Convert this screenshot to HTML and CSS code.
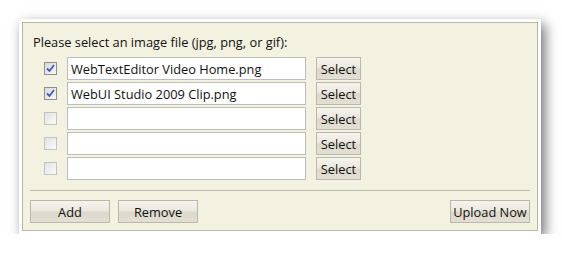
FILE: index.html
```html
<!DOCTYPE html>
<html lang="en">
<head>
    <meta charset="UTF-8">
    <title>Image Upload</title>
    <link rel="stylesheet" href="styles.css">
</head>
<body>
    <div class="frame">
        <div class="panel">
            <div class="prompt">Please select an image file (jpg, png, or gif):</div>

            <div class="rows">
                <div class="row">
                    <span class="check checked"><svg viewBox="0 0 9 9" width="9" height="9"><path d="M1 4.5 L3.5 7 L8 1" fill="none" stroke="#3b5cb4" stroke-width="1.8"/></svg></span>
                    <input class="field" type="text" value="WebTextEditor Video Home.png">
                    <button class="btn select-btn">Select</button>
                </div>
                <div class="row">
                    <span class="check checked"><svg viewBox="0 0 9 9" width="9" height="9"><path d="M1 4.5 L3.5 7 L8 1" fill="none" stroke="#3b5cb4" stroke-width="1.8"/></svg></span>
                    <input class="field" type="text" value="WebUI Studio 2009 Clip.png">
                    <button class="btn select-btn">Select</button>
                </div>
                <div class="row">
                    <span class="check"></span>
                    <input class="field" type="text" value="">
                    <button class="btn select-btn">Select</button>
                </div>
                <div class="row">
                    <span class="check"></span>
                    <input class="field" type="text" value="">
                    <button class="btn select-btn">Select</button>
                </div>
                <div class="row">
                    <span class="check"></span>
                    <input class="field" type="text" value="">
                    <button class="btn select-btn">Select</button>
                </div>
            </div>

            <div class="separator"></div>

            <div class="actions">
                <button class="btn action-btn">Add</button>
                <button class="btn action-btn">Remove</button>
                <button class="btn action-btn upload-btn">Upload Now</button>
            </div>
        </div>
    </div>
</body>
</html>
```

FILE: styles.css
```css
* {
    margin: 0;
    padding: 0;
    box-sizing: border-box;
}

body {
    font-family: 'Open Sans', 'DejaVu Sans', sans-serif;
    font-size: 12.8px;
    color: #1a1a1a;
    background: #ffffff;
}

.frame {
    width: 522px;
    margin: 19px 0 0 19px;
    padding: 3px;
    background: #ffffff;
    box-shadow: 4px 5px 12px rgba(0, 0, 0, 0.55);
}

.panel {
    background: #f3f1e0;
    border: 1px solid #b9b7a8;
    padding: 11px 7px 7px 7px;
}

.prompt {
    padding-left: 3px;
    line-height: 16px;
    color: #111111;
}

.rows {
    margin-top: 7px;
    display: flex;
    flex-direction: column;
    gap: 2px;
}

.row {
    display: flex;
    align-items: center;
    height: 23px;
    padding-left: 14px;
}

.check {
    width: 13px;
    height: 13px;
    border: 1px solid #c3c3c3;
    background: linear-gradient(135deg, #e2e2e2, #fbfbfb);
    display: flex;
    align-items: center;
    justify-content: center;
    margin-right: 10px;
}

.check.checked {
    border-color: #8e8f8f;
    background: linear-gradient(135deg, #d8d8d8, #f8f8f8);
}

.field {
    width: 239px;
    height: 23px;
    border: 1px solid #bdbdbd;
    background: #ffffff;
    font-family: inherit;
    font-size: 12.8px;
    color: #111111;
    padding: 0 3px;
    outline: none;
    margin-right: 10px;
}

.btn {
    font-family: inherit;
    font-size: 12.8px;
    color: #111111;
    border: 1px solid #bab8ab;
    background: linear-gradient(to bottom, #f5f4ee 0%, #ebe8df 45%, #ddd8cc 55%, #e3dfd4 100%);
    cursor: pointer;
}

.select-btn {
    width: 45px;
    height: 23px;
}

.separator {
    height: 1px;
    background: #bcbaad;
    margin-top: 10px;
}

.actions {
    display: flex;
    gap: 8px;
    margin-top: 9px;
}

.action-btn {
    width: 80px;
    height: 23px;
}

.upload-btn {
    margin-left: auto;
}
```
